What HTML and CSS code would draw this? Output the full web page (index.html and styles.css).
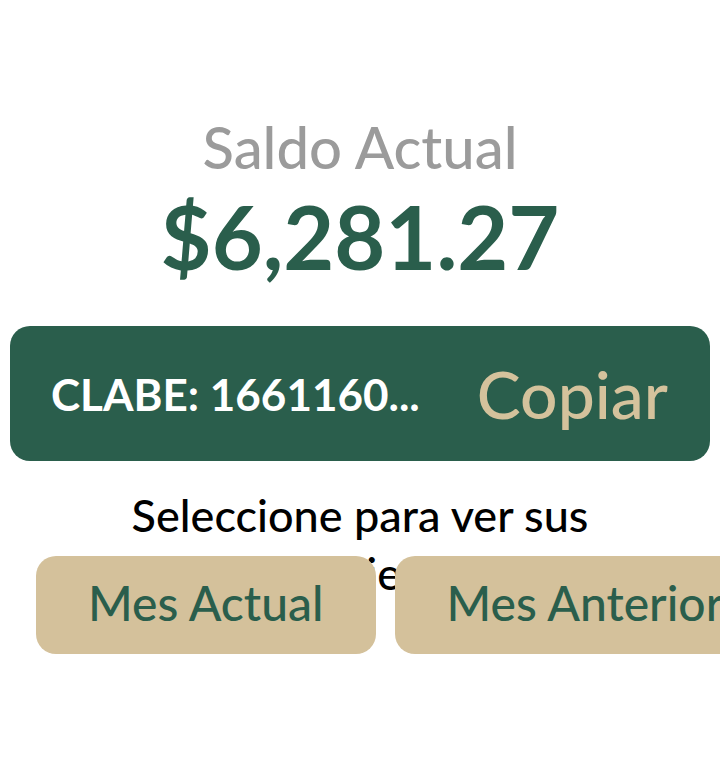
FILE: index.html
```html
<!DOCTYPE html>
<html lang="es">
<head>
<meta charset="utf-8">
<title>Saldo</title>
<link rel="stylesheet" href="styles.css">
</head>
<body>
<main class="screen">
  <section class="balance">
    <h2 class="balance-label">Saldo Actual</h2>
    <p class="balance-amount">$6,281.27</p>
  </section>
  <div class="clabe-bar">
    <span class="clabe-text">CLABE: 1661160...</span>
    <span class="clabe-copy">Copiar</span>
  </div>
  <p class="prompt">Seleccione para ver sus movimientos</p>
  <div class="month-row">
    <button class="month-btn">Mes Actual</button>
    <button class="month-btn">Mes Anterior</button>
  </div>
</main>
</body>
</html>
```

FILE: styles.css
```css
html, body {
  margin: 0;
  padding: 0;
  background: #ffffff;
}
body {
  font-family: "Lato", "Noto Sans", sans-serif;
  width: 720px;
  height: 784px;
  overflow: hidden;
}
.screen {
  display: flex;
  flex-direction: column;
  padding-top: 112px;
}
.balance {
  display: flex;
  flex-direction: column;
  align-items: center;
}
.balance-label {
  margin: 0;
  font-size: 58px;
  font-weight: 500;
  line-height: 70px;
  color: #9b9b9b;
}
.balance-amount {
  margin: 0;
  font-size: 88px;
  font-weight: 700;
  line-height: 108px;
  color: #2a5e4c;
}
.clabe-bar {
  margin: 36px 10px 0 10px;
  height: 135px;
  border-radius: 20px;
  background: #2a5e4c;
  display: flex;
  align-items: center;
  justify-content: space-between;
  padding: 0 42px 0 41px;
}
.clabe-text {
  color: #ffffff;
  font-size: 44px;
  font-weight: 700;
}
.clabe-copy {
  color: #d4c29c;
  font-size: 66px;
  font-weight: 500;
}
.prompt {
  margin: 25px 0 0 0;
  height: 58px;
  font-size: 45px;
  font-weight: 500;
  line-height: 58px;
  color: #000000;
  text-align: center;
  padding: 0 110px;
}
.month-row {
  position: relative;
  display: flex;
  gap: 19px;
  padding-left: 36px;
  margin-top: 12px;
}
.month-btn {
  flex: 0 0 auto;
  height: 98px;
  border: none;
  border-radius: 20px;
  background: #d4c19b;
  color: #2a5e4c;
  font-family: "Lato", "Noto Sans", sans-serif;
  font-size: 48px;
  font-weight: 500;
  padding: 0 52px 6px 52px;
  white-space: nowrap;
}
```
